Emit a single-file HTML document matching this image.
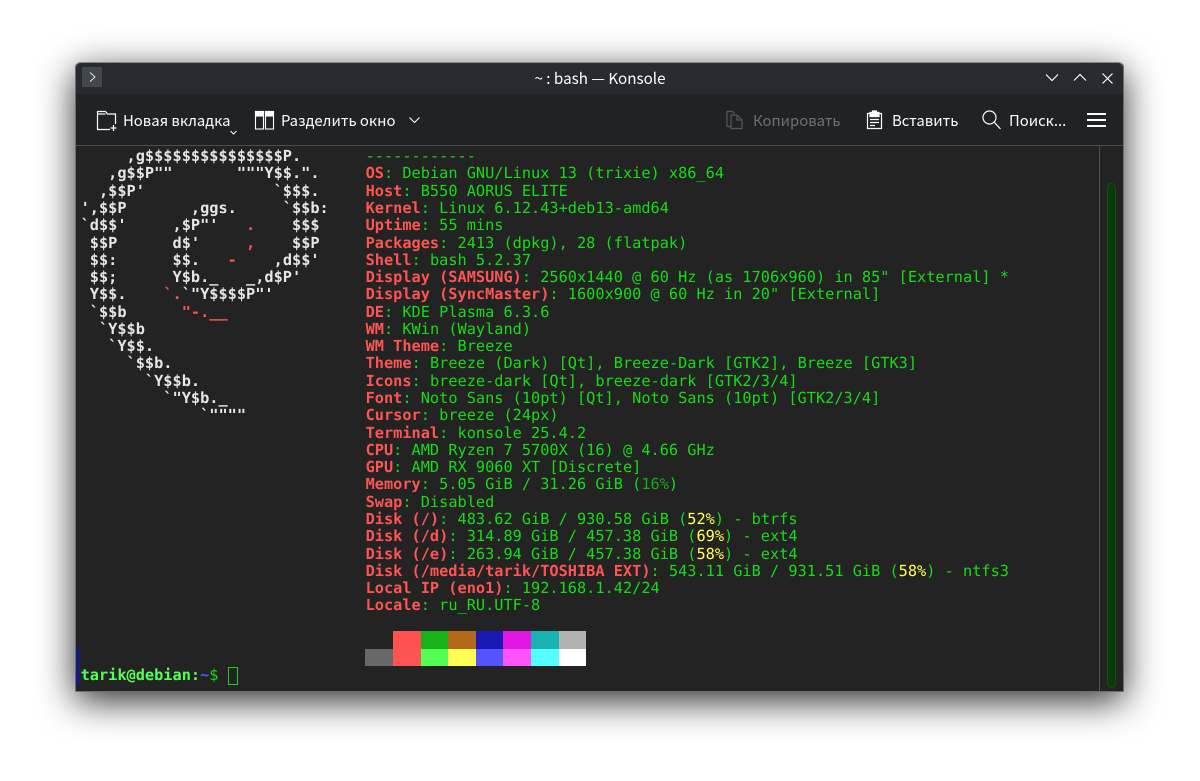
<!DOCTYPE html>
<html>
<head>
<meta charset="utf-8">
<style>
html,body{margin:0;padding:0;background:#fff;width:1200px;height:781px;overflow:hidden}
#win{position:absolute;left:75px;top:62px;width:1049px;height:630px;background:#232323;border-radius:6px 6px 2px 2px;box-shadow:0 9px 36px rgba(0,0,0,.82);overflow:hidden}
#tb{position:absolute;left:0;top:0;width:1049px;height:32px;background:#272a2f;border-top:1px solid #777}
#bar{position:absolute;left:0;top:32px;width:1049px;height:51px;background:#202326;border-bottom:1px solid #4a4c4f}
#frame{position:absolute;left:75px;top:62px;width:1047px;height:628px;border:1px solid #6a6c6e;border-radius:6px 6px 2px 2px;pointer-events:none;border-top-color:#8a8a8a}
.ui{position:absolute;font-family:"Noto Sans CJK JP","Liberation Sans",sans-serif;font-size:14.85px;color:#fcfcfc;white-space:nowrap;line-height:20px}
pre{position:absolute;margin:0;font-family:"DejaVu Sans Mono",monospace;font-size:15.27px;line-height:17.28px;color:#16dc16;text-rendering:geometricPrecision}
#logo{left:80.6px;top:148.1px;color:#e6e6e6;font-weight:bold}
#info{left:365.6px;top:148.1px}
b{color:#ff5454;font-weight:bold}
i{font-style:normal;color:#ff5454}
u{text-decoration:none;color:#ffff54}
s{text-decoration:none;color:#18a818}
svg{position:absolute;overflow:visible}
.c{position:absolute;width:27.6px;height:17.5px}
</style>
</head>
<body>
<div id="win">
<div id="tb"></div>
<div id="bar"></div>
</div>

<pre id="logo">     ,g$$$$$$$$$$$$$$$P.
   ,g$$P""       """Y$$.".
  ,$$P'              `$$$.
',$$P       ,ggs.     `$$b:
`d$$'     ,$P"'   <i>.</i>    $$$
 $$P      d$'     <i>,</i>    $$P
 $$:      $$.   <i>-</i>    ,d$$'
 $$;      Y$b._   _,d$P'
 Y$$.    <i>`.</i>`"Y$$$$P"'
 `$$b      <i>"-.__</i>
  `Y$$b
   `Y$$.
     `$$b.
       `Y$$b.
         `"Y$b._
             `""""</pre>

<pre id="info">------------
<b>OS</b>: Debian GNU/Linux 13 (trixie) x86_64
<b>Host</b>: B550 AORUS ELITE
<b>Kernel</b>: Linux 6.12.43+deb13-amd64
<b>Uptime</b>: 55 mins
<b>Packages</b>: 2413 (dpkg), 28 (flatpak)
<b>Shell</b>: bash 5.2.37
<b>Display (SAMSUNG)</b>: 2560x1440 @ 60 Hz (as 1706x960) in 85" [External] *
<b>Display (SyncMaster)</b>: 1600x900 @ 60 Hz in 20" [External]
<b>DE</b>: KDE Plasma 6.3.6
<b>WM</b>: KWin (Wayland)
<b>WM Theme</b>: Breeze
<b>Theme</b>: Breeze (Dark) [Qt], Breeze-Dark [GTK2], Breeze [GTK3]
<b>Icons</b>: breeze-dark [Qt], breeze-dark [GTK2/3/4]
<b>Font</b>: Noto Sans (10pt) [Qt], Noto Sans (10pt) [GTK2/3/4]
<b>Cursor</b>: breeze (24px)
<b>Terminal</b>: konsole 25.4.2
<b>CPU</b>: AMD Ryzen 7 5700X (16) @ 4.66 GHz
<b>GPU</b>: AMD RX 9060 XT [Discrete]
<b>Memory</b>: 5.05 GiB / 31.26 GiB (<s>16%</s>)
<b>Swap</b>: Disabled
<b>Disk (/)</b>: 483.62 GiB / 930.58 GiB (<u>52%</u>) - btrfs
<b>Disk (/d)</b>: 314.89 GiB / 457.38 GiB (<u>69%</u>) - ext4
<b>Disk (/e)</b>: 263.94 GiB / 457.38 GiB (<u>58%</u>) - ext4
<b>Disk (/media/tarik/TOSHIBA EXT)</b>: 543.11 GiB / 931.51 GiB (<u>58%</u>) - ntfs3
<b>Local IP (eno1)</b>: 192.168.1.42/24
<b>Locale</b>: ru_RU.UTF-8</pre>

<!-- colour blocks -->
<div class="c" style="left:393px;top:631px;background:#ff5050"></div>
<div class="c" style="left:420.6px;top:631px;background:#18b218"></div>
<div class="c" style="left:448.2px;top:631px;background:#b26818"></div>
<div class="c" style="left:475.8px;top:631px;background:#1818b2"></div>
<div class="c" style="left:503.4px;top:631px;background:#e218e2"></div>
<div class="c" style="left:531px;top:631px;background:#18b2b2"></div>
<div class="c" style="left:558.6px;top:631px;background:#b2b2b2"></div>
<div class="c" style="left:365.4px;top:648.5px;background:#686868"></div>
<div class="c" style="left:393px;top:648.5px;background:#ff5454"></div>
<div class="c" style="left:420.6px;top:648.5px;background:#54ff54"></div>
<div class="c" style="left:448.2px;top:648.5px;background:#ffff54"></div>
<div class="c" style="left:475.8px;top:648.5px;background:#5454ff"></div>
<div class="c" style="left:503.4px;top:648.5px;background:#ff54ff"></div>
<div class="c" style="left:531px;top:648.5px;background:#54ffff"></div>
<div class="c" style="left:558.6px;top:648.5px;background:#ffffff"></div>

<!-- prompt -->
<div style="position:absolute;left:76px;top:648px;width:4px;height:37px;background:#1a1a78"></div>
<pre style="left:80.6px;top:666.7px;font-weight:bold;color:#54ff54">tarik@debian:<span style="color:#5454ff">~</span><span style="color:#16dc16;font-weight:normal">$</span></pre>
<div style="position:absolute;left:228px;top:667px;width:8px;height:16px;border:1.4px solid #18d218"></div>

<!-- scrollbar -->
<div style="position:absolute;left:1099px;top:146px;width:1px;height:545px;background:#4f5153"></div>
<div style="position:absolute;left:1107px;top:183px;width:7px;height:503px;background:#0a3a0a;border:1px solid #0e520e;border-radius:5px"></div>

<!-- title bar -->
<div style="position:absolute;left:82px;top:67px;width:20px;height:20px;background:#43484e"></div>
<svg style="left:82px;top:67px" width="20" height="20" fill="none" stroke="#dfe0e1" stroke-width="1"><path d="M8 5.500l5 4.500-5 4.500"/></svg>
<div class="ui" style="left:400px;top:68px;width:400px;text-align:center;font-size:15.2px">~ : bash — Konsole</div>
<svg style="left:1044px;top:71px" width="80" height="16" fill="none" stroke="#fcfcfc" stroke-width="1.200">
<path d="M2 3.500l6 6 6-6"/>
<path d="M30 9.500l6-6 6 6"/>
<path d="M58.500 2.500l10 10M68.500 2.500l-10 10"/>
</svg>

<!-- toolbar -->
<svg style="left:96px;top:110px" width="22" height="22" fill="none" stroke="#fcfcfc" stroke-width="1.200">
<path d="M14 19.500H1.500V1.500h8l2 2.500h8v10"/>
<path d="M1.500 4h8" />
<path d="M17.500 15v6M14.500 18h6" stroke-width="1.300"/>
</svg>
<div class="ui" style="left:123px;top:111px">Новая вкладка</div>
<svg style="left:229px;top:130px" width="10" height="6" fill="none" stroke="#fcfcfc" stroke-width="1"><path d="M1.500 1l3 3 3-3"/></svg>

<svg style="left:255px;top:111px" width="20" height="20" fill="none" stroke="#fcfcfc" stroke-width="1.100">
<rect x="0.500" y="0.500" width="8" height="17.500"/>
<rect x="10.500" y="0.500" width="8" height="17.500"/>
<rect x="0.500" y="0.500" width="8" height="4.500" fill="#fcfcfc"/>
<rect x="10.500" y="0.500" width="8" height="4.500" fill="#fcfcfc"/>
</svg>
<div class="ui" style="left:281px;top:111px">Разделить окно</div>
<svg style="left:408px;top:116px" width="14" height="10" fill="none" stroke="#fcfcfc" stroke-width="1.100"><path d="M1.500 1.500l5 5 5-5"/></svg>

<svg style="left:726px;top:110px" width="18" height="20" fill="none" stroke="#55575a" stroke-width="1.200">
<path d="M5 16.500H1V1.500h5.500l2 2"/>
<path d="M5 5h6l5 5v8.500H5z"/>
<path d="M11 5v5h5"/>
</svg>
<div class="ui" style="left:753px;top:111px;color:#6e7073">Копировать</div>

<svg style="left:866px;top:110px" width="18" height="20" fill="none" stroke="#fcfcfc" stroke-width="1.200">
<path d="M4 3.500H1.500v15h14v-15H13"/>
<path d="M4 2.500h9v4H4z" fill="#fcfcfc"/>
<path d="M6.500 1h4v2h-4z" fill="#fcfcfc"/>
<path d="M4 9.500h9M4 12.500h9M4 15.500h5"/>
</svg>
<div class="ui" style="left:892px;top:111px">Вставить</div>

<svg style="left:982px;top:110px" width="20" height="20" fill="none" stroke="#fcfcfc" stroke-width="1.200">
<circle cx="7.500" cy="7.500" r="6.500"/>
<path d="M12.500 12.500l6 6.500"/>
</svg>
<div class="ui" style="left:1009px;top:111px">Поиск...</div>

<svg style="left:1087px;top:112px" width="20" height="16" fill="#fcfcfc">
<rect x="0" y="1" width="19" height="2"/>
<rect x="0" y="7" width="19" height="2"/>
<rect x="0" y="13" width="19" height="2"/>
</svg>

<div id="frame"></div>
</body>
</html>
